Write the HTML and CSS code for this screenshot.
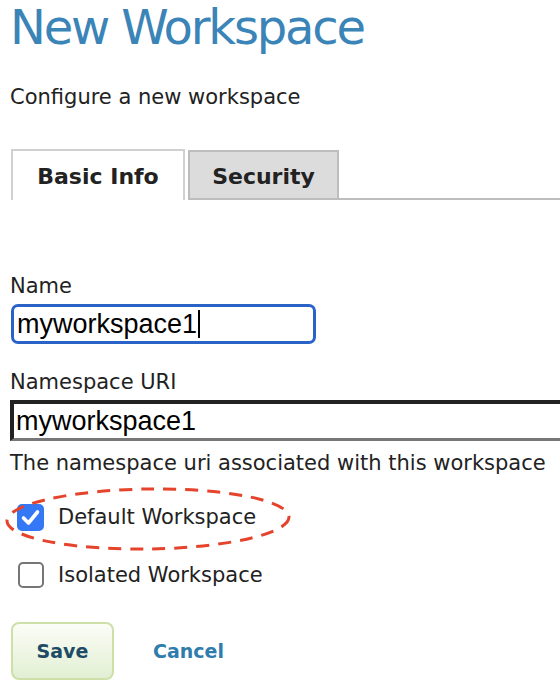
FILE: index.html
```html
<!DOCTYPE html>
<html>
<head>
<meta charset="utf-8">
<link rel="stylesheet" href="styles.css">
</head>
<body>
<div class="page">
  <h1 class="title">New Workspace</h1>
  <p class="subtitle">Configure a new workspace</p>
  <div class="tabs">
    <div class="tab tab-active">Basic Info</div>
    <div class="tab tab-inactive">Security</div>
    <div class="tab-rest"></div>
  </div>
  <div class="form">
    <div class="field field-name">
      <label class="label">Name</label>
      <div class="input input-focus"><span>myworkspace1</span><span class="caret"></span></div>
    </div>
    <div class="field field-uri">
      <label class="label">Namespace URI</label>
      <div class="input input-inset">myworkspace1</div>
      <div class="help">The namespace uri associated with this workspace</div>
    </div>
    <div class="checks">
      <div class="check-row check-default">
        <span class="box box-on">
          <svg viewBox="0 0 27 27" width="27" height="27"><path d="M6.5 14 L11.5 19 L20.5 8" fill="none" stroke="#fff" stroke-width="3.6" stroke-linecap="round" stroke-linejoin="round"/></svg>
        </span>
        <span class="check-label">Default Workspace</span>
        <svg class="ellipse" viewBox="0 0 288 66" width="288" height="66"><ellipse cx="144" cy="33" rx="141" ry="30" fill="none" stroke="#e5432b" stroke-width="3" stroke-dasharray="13 9" transform="rotate(-0.8 144 33)"/></svg>
      </div>
      <div class="check-row">
        <span class="box box-off"></span>
        <span class="check-label">Isolated Workspace</span>
      </div>
    </div>
    <div class="actions">
      <button class="btn-save">Save</button>
      <a class="btn-cancel">Cancel</a>
    </div>
  </div>
</div>
</body>
</html>
```
FILE: styles.css
```css
* { box-sizing: border-box; }
html, body { margin: 0; padding: 0; background: #fff; }
body { font-family: "DejaVu Sans", Verdana, sans-serif; color: #222; width: 560px; height: 688px; overflow: hidden; }
.page { padding-left: 10px; }
.title {
  margin: 0;
  font-size: 48px;
  line-height: 54px;
  font-weight: normal;
  color: #3a84b7;
  letter-spacing: -2.2px;
}
.subtitle {
  margin: 31px 0 0 0;
  font-size: 21px;
  line-height: 24px;
  color: #222;
}
.tabs {
  display: flex;
  align-items: flex-end;
  margin-top: 40px;
  height: 51px;
}
.tab {
  font-weight: bold;
  font-size: 22px;
  color: #222;
  display: flex;
  align-items: center;
  justify-content: center;
}
.tab-active {
  width: 174px;
  height: 51px;
  margin-left: 1px;
  border: 2px solid #d0d0d0;
  border-bottom: none;
  background: #fff;
  padding-top: 2px;
}
.tab-inactive {
  width: 151px;
  height: 50px;
  margin-left: 3px;
  background: #dcdcdc;
  border: 2px solid #bdbdbd;
  padding-top: 2px;
}
.tab-rest {
  flex: 1;
  border-bottom: 2px solid #bdbdbd;
  height: 2px;
}
.form { display: flex; flex-direction: column; }
.label {
  display: block;
  font-size: 21px;
  line-height: 24px;
  color: #222;
}
.field-name { margin-top: 74px; }
.field-name .label { margin-bottom: 6px; }
.input {
  font-family: "Liberation Sans", Arial, sans-serif;
  font-size: 27px;
  color: #000;
  display: flex;
  align-items: center;
}
.input-focus {
  width: 305px;
  height: 40px;
  margin-left: 1px;
  border: 3px solid #2a63c8;
  border-radius: 7px;
  padding-left: 3px;
}
.caret {
  display: inline-block;
  width: 2px;
  height: 28px;
  background: #000;
  margin-left: 1px;
}
.field-uri { margin-top: 26px; }
.field-uri .label { margin-bottom: 6px; }
.input-inset {
  width: 560px;
  height: 41px;
  border-top: 4px solid #222;
  border-left: 4px solid #222;
  border-bottom: 3px solid #777;
  border-right: none;
  padding-left: 2px;
}
.help {
  font-size: 21px;
  line-height: 24px;
  margin-top: 10px;
}
.checks { display: flex; flex-direction: column; margin-top: 28px; gap: 30px; }
.check-row {
  position: relative;
  display: flex;
  align-items: center;
  height: 28px;
  padding-left: 7px;
}
.box {
  width: 27px;
  height: 27px;
  border-radius: 5px;
  flex: none;
  display: block;
}
.box-on { background: #3478f6; }
.box svg { display: block; }
.box-off { border: 2px solid #767676; background: #fff; width: 26px; height: 26px; margin-left: 1px; }
.check-label {
  font-size: 21px;
  margin-left: 14px;
  color: #222;
}
.check-default .ellipse {
  position: absolute;
  left: -6px;
  top: -17px;
}
.actions {
  display: flex;
  align-items: center;
  margin-top: 33px;
}
.btn-save {
  width: 103px;
  height: 58px;
  border: 2px solid #cde0a8;
  border-radius: 8px;
  background: linear-gradient(#fbfdf7, #e2efd3);
  font-family: "DejaVu Sans", Verdana, sans-serif;
  font-weight: bold;
  font-size: 19px;
  color: #1f4c65;
  padding: 0;
  margin-left: 1px;
}
.btn-cancel {
  margin-left: 39px;
  font-weight: bold;
  font-size: 19px;
  color: #2f7dad;
}
```
